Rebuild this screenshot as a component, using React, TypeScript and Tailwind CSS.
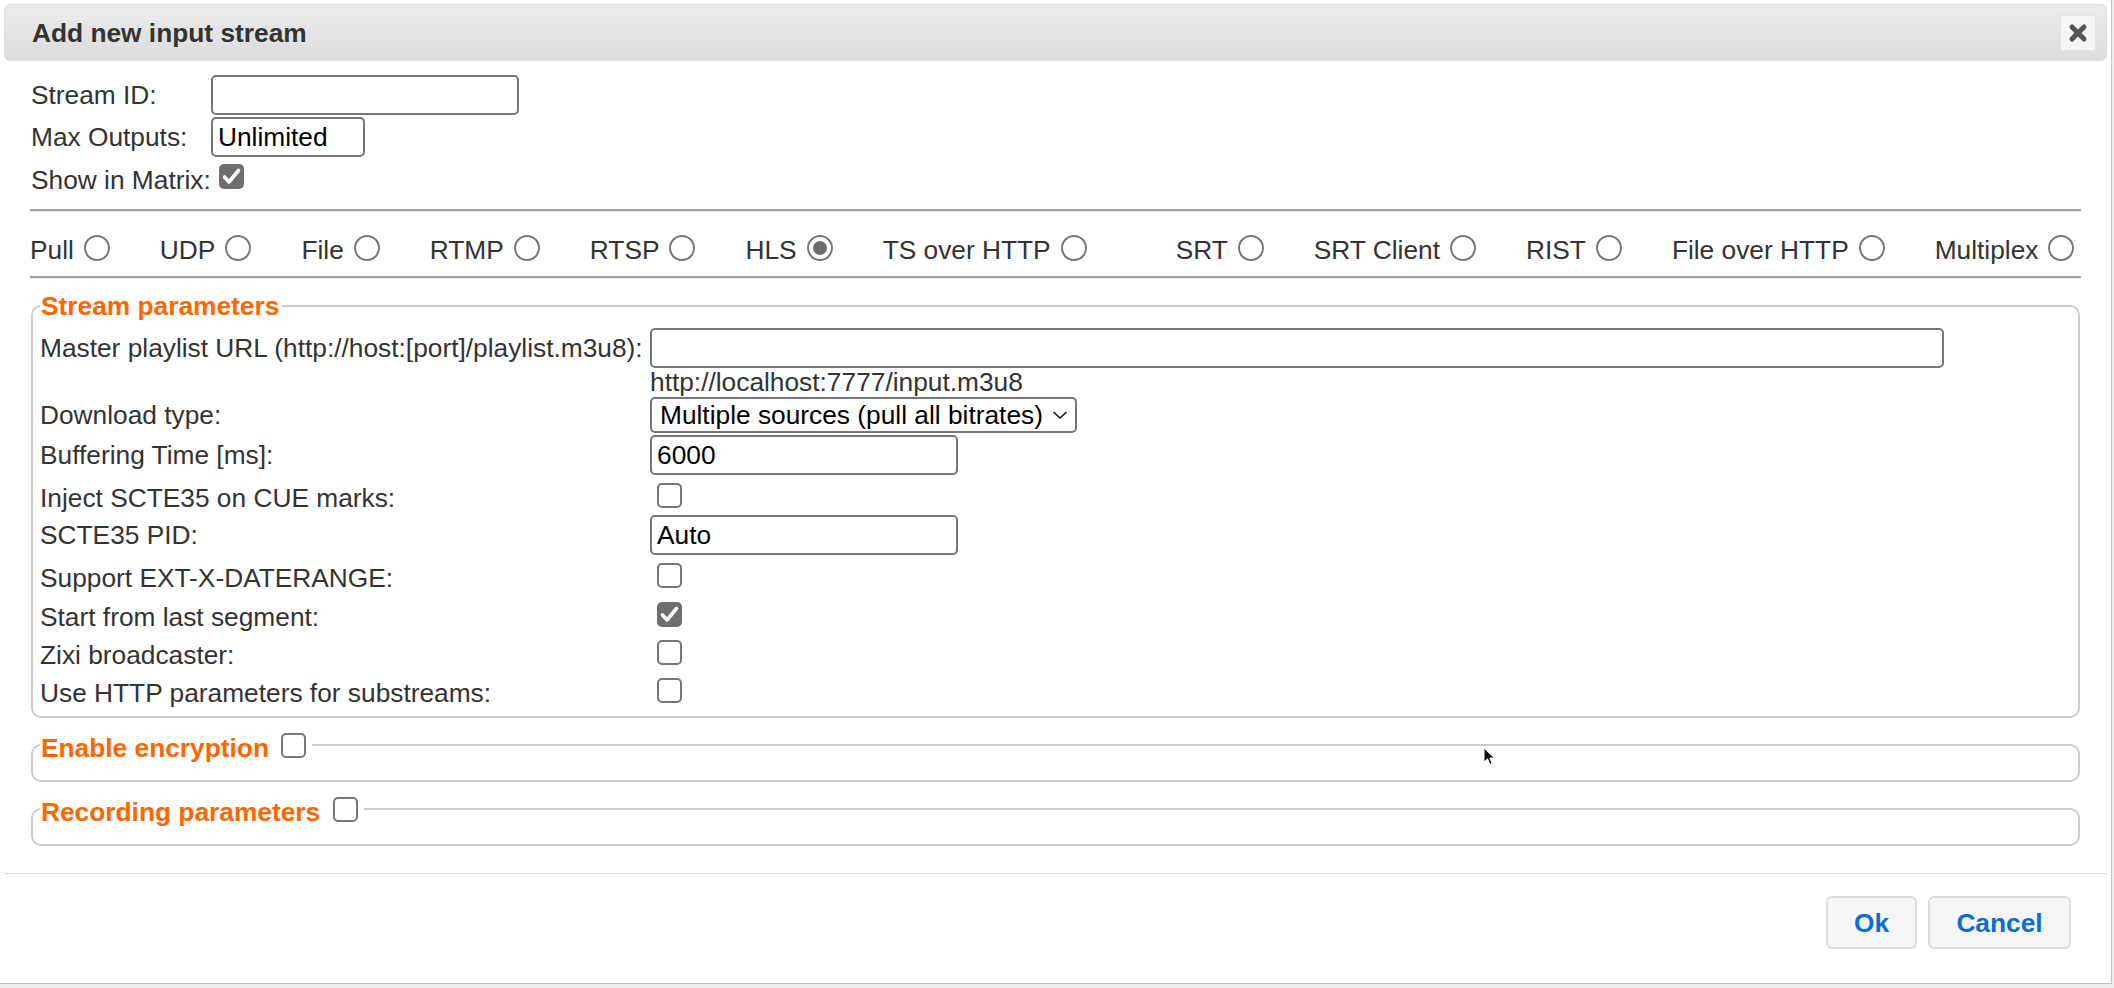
import React from "react";

function Checkbox({ checked }: { checked?: boolean }) {
  if (checked) {
    return (
      <span className="inline-flex w-[25px] h-[25px] shrink-0 rounded-[5px] bg-[#6e6e6e] items-center justify-center">
        <svg width="25" height="25" viewBox="0 0 25 25">
          <path d="M5.5 13 L10 18 L19.5 6.5" fill="none" stroke="#ffffff" strokeWidth="3.6" strokeLinecap="round" strokeLinejoin="round" />
        </svg>
      </span>
    );
  }
  return <span className="inline-block w-[25px] h-[25px] shrink-0 rounded-[5px] border-2 border-[#767676] bg-white" />;
}

function Radio({ checked }: { checked?: boolean }) {
  return (
    <span className="inline-flex w-[26px] h-[26px] shrink-0 rounded-full border-2 border-[#767676] bg-white items-center justify-center">
      {checked && <span className="w-[14px] h-[14px] rounded-full bg-[#6e6e6e]" />}
    </span>
  );
}

function TextBox({ w, value }: { w: string; value?: string }) {
  return (
    <div className={`h-[40px] ${w} border-2 border-[#767676] rounded-[5px] bg-white px-[5px] flex items-center text-black`}>
      {value}
    </div>
  );
}

const protocols: { name: string; checked?: boolean; extra?: string }[] = [
  { name: "Pull" },
  { name: "UDP" },
  { name: "File" },
  { name: "RTMP" },
  { name: "RTSP" },
  { name: "HLS", checked: true },
  { name: "TS over HTTP" },
  { name: "SRT", extra: "ml-[39px]" },
  { name: "SRT Client" },
  { name: "RIST" },
  { name: "File over HTTP" },
  { name: "Multiplex" },
];

function Row({ h, label, children, shift }: { h: string; label: string; children?: React.ReactNode; shift?: boolean }) {
  return (
    <div className={`flex items-center ${h}`}>
      <div className={`w-[610px] shrink-0 ${shift ? "pt-[6px]" : ""}`}>{label}</div>
      {children}
    </div>
  );
}

export default function App() {
  return (
    <div className="relative w-[2114px] h-[988px] bg-[#eeeeee] overflow-hidden font-['Liberation_Sans',Arial,sans-serif] text-[26.3px] leading-[30px] text-[#333333]">
      <div className="w-[2112px] bg-white border-r border-b border-[#c5c5c5] p-[4px] flex flex-col">
        {/* Title bar */}
        <div className="h-[57px] flex items-center justify-between rounded-[6px] border border-[#dddddd] bg-linear-to-b from-[#ececec] to-[#dcdcdc] pl-[27px] pr-[10px]">
          <span className="font-bold text-[#333333]">Add new input stream</span>
          <div className="w-[36px] h-[36px] bg-[#f6f6f6] border border-[#e4e4e4] rounded-[3px] flex items-center justify-center">
            <svg width="20" height="20" viewBox="0 0 20 20">
              <path d="M4 4 L16 16 M16 4 L4 16" stroke="#555555" strokeWidth="5" strokeLinecap="round" />
            </svg>
          </div>
        </div>

        {/* Content */}
        <div className="px-[26px] pt-[14px] pb-[27px] flex flex-col">
          <div className="flex flex-col gap-[2px] pl-[1px]">
            <div className="flex items-center h-[40px]">
              <div className="w-[180px] shrink-0">Stream ID:</div>
              <TextBox w="w-[308px]" />
            </div>
            <div className="flex items-center h-[40px]">
              <div className="w-[180px] shrink-0">Max Outputs:</div>
              <TextBox w="w-[154px]" value="Unlimited" />
            </div>
            <div className="flex items-center h-[42px]">
              <span>Show in Matrix:</span>
              <span className="ml-[8px] mb-[8px] flex">
                <Checkbox checked />
              </span>
            </div>
          </div>

          <div className="mt-[8px] h-[3px] border-t-2 border-t-[#a0a0a0] border-b border-b-[#ececec]" />

          <div className="flex items-center h-[64px] pt-[11px] gap-x-[50px]">
            {protocols.map((p) => (
              <span key={p.name} className={`inline-flex items-center shrink-0 ${p.extra ?? ""}`}>
                <span>{p.name}</span>
                <span className="ml-[10px] mb-[3px] flex">
                  <Radio checked={p.checked} />
                </span>
              </span>
            ))}
          </div>

          <div className="h-[3px] border-t-2 border-t-[#a0a0a0] border-b border-b-[#ececec]" />

          {/* Stream parameters */}
          <fieldset className="mt-[12px] mx-[1px] border-2 border-[#cccccc] rounded-[10px] pl-[7px] pt-[7px] pb-[7px]">
            <legend className="pl-[1px] pr-[3px] font-bold text-[#ff6600] leading-[30px]">Stream parameters</legend>
            <div className="flex flex-col">
              <Row h="h-[40px]" label="Master playlist URL (http://host:[port]/playlist.m3u8):">
                <TextBox w="w-[1294px]" />
              </Row>
              <Row h="h-[28px]" label="">
                <span>http://localhost:7777/input.m3u8</span>
              </Row>
              <Row h="h-[38px]" label="Download type:">
                <div className="h-[36px] w-[427px] border-2 border-[#767676] rounded-[5px] bg-white pl-[8px] pr-[7px] flex items-center justify-between text-black">
                  <span>Multiple sources (pull all bitrates)</span>
                  <svg width="16" height="10" viewBox="0 0 16 10">
                    <path d="M1.5 2 L8 8 L14.5 2" fill="none" stroke="#111" strokeWidth="1.6" />
                  </svg>
                </div>
              </Row>
              <Row h="h-[41px]" label="Buffering Time [ms]:">
                <TextBox w="w-[308px]" value="6000" />
              </Row>
              <Row h="h-[40px]" label="Inject SCTE35 on CUE marks:" shift>
                <span className="ml-[7px] flex">
                  <Checkbox />
                </span>
              </Row>
              <Row h="h-[40px]" label="SCTE35 PID:">
                <TextBox w="w-[308px]" value="Auto" />
              </Row>
              <Row h="h-[40px]" label="Support EXT-X-DATERANGE:" shift>
                <span className="ml-[7px] flex">
                  <Checkbox />
                </span>
              </Row>
              <Row h="h-[38px]" label="Start from last segment:" shift>
                <span className="ml-[7px] flex">
                  <Checkbox checked />
                </span>
              </Row>
              <Row h="h-[38px]" label="Zixi broadcaster:" shift>
                <span className="ml-[7px] flex">
                  <Checkbox />
                </span>
              </Row>
              <Row h="h-[38px]" label="Use HTTP parameters for substreams:" shift>
                <span className="ml-[7px] flex">
                  <Checkbox />
                </span>
              </Row>
            </div>
          </fieldset>

          <fieldset className="mt-[12px] mx-[1px] border-2 border-[#cccccc] rounded-[10px] pl-[7px] pb-[20px]">
            <legend className="pl-[1px] pr-[6px] font-bold text-[#ff6600] leading-[30px]">
              <span className="inline-flex items-center h-[30px] align-top">
                <span className="pt-[5px]">Enable encryption</span>
                <span className="ml-[12px] flex">
                  <Checkbox />
                </span>
              </span>
            </legend>
          </fieldset>

          <fieldset className="mt-[12px] mx-[1px] border-2 border-[#cccccc] rounded-[10px] pl-[7px] pb-[20px]">
            <legend className="pl-[1px] pr-[6px] font-bold text-[#ff6600] leading-[30px]">
              <span className="inline-flex items-center h-[30px] align-top">
                <span className="pt-[5px]">Recording parameters</span>
                <span className="ml-[13px] flex">
                  <Checkbox />
                </span>
              </span>
            </legend>
          </fieldset>
        </div>

        {/* Button pane */}
        <div className="border-t border-[#dddddd] pt-[22px] pb-[30px] pr-[36px] flex justify-end gap-[11px]">
          <button className="h-[53px] w-[91px] rounded-[6px] border-2 border-[#dcdcdc] bg-[#f6f6f6] text-[#0a6cd6] font-bold">
            Ok
          </button>
          <button className="h-[53px] w-[143px] rounded-[6px] border-2 border-[#dcdcdc] bg-[#f6f6f6] text-[#0a6cd6] font-bold">
            Cancel
          </button>
        </div>
      </div>

      {/* mouse cursor */}
      <svg className="absolute left-[1483px] top-[747px]" width="13" height="19" viewBox="0 0 13 19">
        <path d="M1 1 L1 15 L4.5 11.8 L7 17.5 L9.2 16.5 L6.8 11 L11.5 11 Z" fill="#111" stroke="#ffffff" strokeWidth="1" />
      </svg>
    </div>
  );
}
